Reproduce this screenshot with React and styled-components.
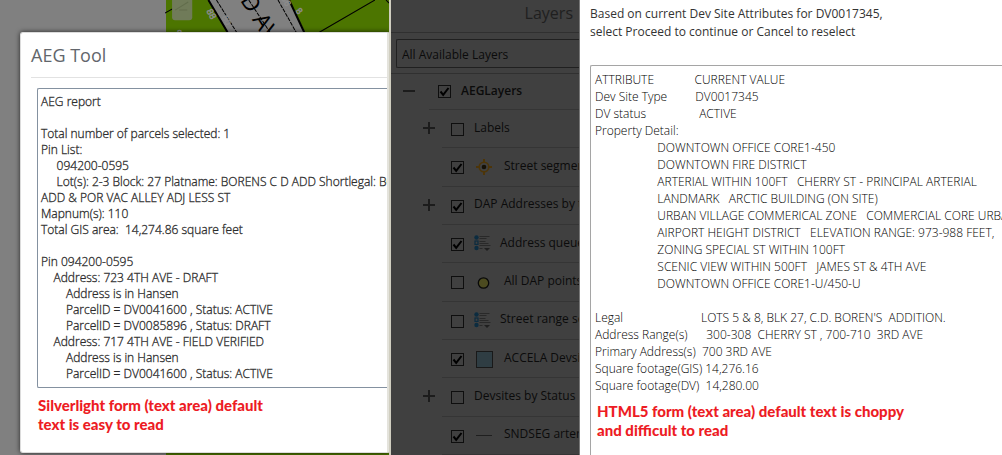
import React from "react";
import styled, { createGlobalStyle } from "styled-components";

const GlobalStyle = createGlobalStyle`
  * {
    box-sizing: border-box;
  }
  body {
    margin: 0;
    overflow: hidden;
    background-color: #fff;
    font-family: "Open Sans", "Noto Sans", sans-serif;
    font-size: 12px;
  }
`;

const Page = styled.main`
  display: grid;
  grid-template-columns: 391fr 189fr 422fr;
  height: 100vh;
  overflow: hidden;
`;

const MapPane = styled.section`
  position: relative;
  min-width: 0;
  overflow: hidden;
  padding: 32px 0 0 20px;
  background-color: #808080;
  border-right: 2px solid #d0cec0;
`;

const MapDrawing = styled.svg`
  position: absolute;
  top: 0;
  left: 165px;
  width: calc(100% - 165px);
  height: 100%;
`;

const Dialog = styled.div`
  position: relative;
  padding-left: 10px;
  padding-bottom: 18px;
  background-color: #fff;
  border: 1px solid #dcdcdc;
  border-right: 2px solid #e4e3dc;
  border-radius: 3px 0 0 3px;
  box-shadow: 0 0 5px rgba(0, 0, 0, 0.7);
`;

const DialogTitle = styled.h1`
  margin: 0;
  padding: 10px 0;
  border-bottom: 1px solid #e2e2e2;
  color: #62666b;
  font-size: 18px;
  font-weight: 400;
  line-height: 24px;
`;

const DialogBody = styled.div`
  padding: 10px 0 0 6px;
`;

const TextBox = styled.textarea`
  display: block;
  width: 100%;
  margin: 0;
  padding: ${(props) => (props.$html5 ? "5px 4px" : "5px 3px")};
  border: 1px solid ${(props) => (props.$html5 ? "#a5a5a5" : "#8491a0")};
  border-right: 0;
  border-radius: 2px 0 0 2px;
  outline: none;
  resize: none;
  overflow: hidden;
  white-space: pre;
  background-color: #fff;
  color: ${(props) => (props.$html5 ? "#000" : "#2b2b2b")};
  font-family: "Open Sans", "Noto Sans", sans-serif;
  font-size: 12px;
  font-weight: 300;
  line-height: ${(props) => (props.$html5 ? "17px" : "16px")};
  -webkit-text-stroke: ${(props) => (props.$html5 ? "0" : "0.3px #2b2b2b")};
`;

const Note = styled.p`
  margin: 0;
  padding: 8px 0 0 1px;
  color: #ed1c24;
  font-family: Lato, "Open Sans", sans-serif;
  font-size: 15px;
  font-weight: 900;
  line-height: 19px;
  white-space: pre;
`;

const OverlayNote = styled(Note)`
  position: absolute;
  top: 337px;
  left: 7px;
  padding: 0;
`;

const LayerPane = styled.section`
  display: flex;
  flex-direction: column;
  min-width: 0;
  overflow: hidden;
  background-color: #404040;
  border-right: 1px solid #777;
  color: #0b0b0b;
`;

const PaneTitle = styled.h2`
  flex: none;
  margin: 0;
  padding: 0 6px 5px;
  border-bottom: 1px solid #303030;
  color: #1f1f1f;
  font-size: 16px;
  font-weight: 400;
  line-height: 27px;
  text-align: right;
`;

const FilterBar = styled.div`
  flex: none;
  padding: 6px 0 5px 5px;
  border-bottom: 1px solid #303030;
`;

const Filter = styled.select`
  display: block;
  appearance: none;
  width: 100%;
  height: 29px;
  padding: 2px 5px 0;
  border: 1px solid #202020;
  border-right: 0;
  border-radius: 2px 0 0 2px;
  background-color: #404040;
  color: #0b0b0b;
  font-family: inherit;
  font-size: 12px;
`;

const LayerList = styled.ul`
  flex: 1;
  display: flex;
  flex-direction: column;
  margin: 0;
  padding: 0;
  list-style: none;
`;

const LayerRow = styled.li`
  flex: ${(props) => (props.$root ? "0 0 36px" : "1")};
  display: grid;
  grid-template-columns: ${(props) => (props.$root ? "26px" : "19px")} 1fr;
  padding-left: ${(props) => (props.$root ? "12px" : "32px")};
`;

const Expander = styled.button`
  align-self: center;
  width: 12px;
  height: 12px;
  margin-bottom: 2px;
  padding: 0;
  border: 0;
  background: transparent;
  color: #1c1c1c;

  svg {
    display: block;
  }
`;

const LayerBody = styled.div`
  grid-column: 2;
  display: flex;
  align-items: center;
  min-width: 0;
  padding-left: 9px;
  border-bottom: 1px solid #353535;
`;

const Check = styled.input`
  appearance: none;
  flex: none;
  width: 13px;
  height: 13px;
  margin: ${(props) => (props.$root ? "0" : "2px")} 10px 0 0;
  border: 1px solid #0e0e0e;

  &:checked {
    background: url("data:image/svg+xml,%3Csvg xmlns='http://www.w3.org/2000/svg' viewBox='0 0 11 11'%3E%3Cpath d='M1.5 5.5L4.2 8.8L9.5 2' fill='none' stroke='%23000' stroke-width='2'/%3E%3C/svg%3E");
  }
`;

const Swatch = styled.span`
  flex: none;
  display: flex;
  width: ${(props) => (props.$narrow ? "26px" : "30px")};

  svg {
    display: block;
  }
`;

const LayerLabel = styled.label`
  font-size: 12px;
  font-weight: ${(props) => (props.$root ? 600 : 400)};
  line-height: 16px;
  padding-bottom: 2px;
  white-space: nowrap;
`;

const FormPane = styled.section`
  display: flex;
  flex-direction: column;
  min-width: 0;
  overflow: hidden;
  padding: 5px 0 0 10px;
  background-color: #fff;
`;

const Prompt = styled.p`
  margin: 0 0 24px;
  color: #333;
  font-size: 12px;
  line-height: 18px;
  white-space: pre;
`;

const FormBox = styled.div`
  position: relative;
`;

const report = [
  "AEG report",
  "",
  "Total number of parcels selected: 1",
  "Pin List:",
  "     094200-0595",
  "     Lot(s): 2-3 Block: 27 Platname: BORENS C D ADD Shortlegal: BORENS",
  "ADD & POR VAC ALLEY ADJ LESS ST",
  "Mapnum(s): 110",
  "Total GIS area:  14,274.86 square feet",
  "",
  "Pin 094200-0595",
  "    Address: 723 4TH AVE - DRAFT",
  "        Address is in Hansen",
  "        ParcelID = DV0041600 , Status: ACTIVE",
  "        ParcelID = DV0085896 , Status: DRAFT",
  "    Address: 717 4TH AVE - FIELD VERIFIED",
  "        Address is in Hansen",
  "        ParcelID = DV0041600 , Status: ACTIVE",
].join("\n");

const indent = " ".repeat(20);

const attributes = [
  "ATTRIBUTE             CURRENT VALUE",
  "Dev Site Type         DV0017345",
  "DV status                 ACTIVE",
  "Property Detail:",
  indent + "DOWNTOWN OFFICE CORE1-450",
  indent + "DOWNTOWN FIRE DISTRICT",
  indent + "ARTERIAL WITHIN 100FT   CHERRY ST - PRINCIPAL ARTERIAL",
  indent + "LANDMARK   ARCTIC BUILDING (ON SITE)",
  indent + "URBAN VILLAGE COMMERICAL ZONE   COMMERCIAL CORE URBAN",
  indent + "AIRPORT HEIGHT DISTRICT   ELEVATION RANGE: 973-988 FEET,",
  indent + "ZONING SPECIAL ST WITHIN 100FT",
  indent + "SCENIC VIEW WITHIN 500FT   JAMES ST & 4TH AVE",
  indent + "DOWNTOWN OFFICE CORE1-U/450-U",
  "",
  "Legal                         LOTS 5 & 8, BLK 27, C.D. BOREN'S  ADDITION.",
  "Address Range(s)      300-308  CHERRY ST , 700-710  3RD AVE",
  "Primary Address(s)  700 3RD AVE",
  "Square footage(GIS) 14,276.16",
  "Square footage(DV)  14,280.00",
].join("\n");

const layers = [
  { name: "AEGLayers", root: true, expander: "minus", checked: true },
  { name: "Labels", expander: "plus" },
  { name: "Street segments", icon: "target", checked: true },
  { name: "DAP Addresses by type", expander: "plus", checked: true },
  { name: "Address queue", icon: "legend", checked: true },
  { name: "All DAP points", icon: "dot" },
  { name: "Street range segments", icon: "legend" },
  { name: "ACCELA Devsites", icon: "square", checked: true },
  { name: "Devsites by Status", expander: "plus" },
  { name: "SNDSEG arterials", icon: "line", checked: true },
];

function LayerIcon({ type }) {
  if (type === "target") {
    return (
      <svg width="20" height="18" viewBox="0 0 20 18">
        <g fill="none" stroke="#4d3508" strokeWidth="1.6">
          <circle cx="10" cy="9" r="4.8" />
          <path d="M10 1v4M10 13v4M2 9h4M14 9h4" strokeWidth="2" />
        </g>
        <circle cx="10" cy="9" r="2.3" fill="#151005" />
      </svg>
    );
  }
  if (type === "legend") {
    return (
      <svg width="17" height="17" viewBox="0 0 17 17">
        <g fill="#0c2c40">
          <circle cx="2.5" cy="2.5" r="2.2" />
          <circle cx="2.5" cy="13" r="2.2" />
        </g>
        <rect x="1" y="6" width="3" height="3.4" fill="none" stroke="#0c2c40" strokeWidth="1.2" />
        <path d="M5.500 1.500h10M5.500 3.500h7M5.500 6.500h6M5.500 8.500h9M5.500 10.500h11M5.500 13.500h3" stroke="#292929" />
        <path d="M10 13h6l-3 3z" fill="#1f1f1f" />
      </svg>
    );
  }
  if (type === "dot") {
    return (
      <svg width="20" height="16" viewBox="0 0 20 16">
        <circle cx="9.500" cy="9" r="5.200" fill="#4c4b20" stroke="#090909" strokeWidth="1.300" />
      </svg>
    );
  }
  if (type === "square") {
    return (
      <svg width="20" height="18" viewBox="0 0 20 18">
        <rect x="2.500" y="1.500" width="16" height="16" fill="#2f3d43" stroke="#191919" />
      </svg>
    );
  }
  return (
    <svg width="20" height="16" viewBox="0 0 20 16">
      <path d="M2 8.500h16" stroke="#1f1f1f" />
    </svg>
  );
}

function Layer({ layer }) {
  const id = "layer-" + layer.name.toLowerCase().replace(/ /g, "-");

  return (
    <LayerRow $root={layer.root}>
      {layer.expander && (
        <Expander type="button" aria-label={"Toggle " + layer.name}>
          <svg width="12" height="12" viewBox="0 0 12 12">
            <path
              d={layer.expander === "plus" ? "M0 6h12M6 0v12" : "M0 6h12"}
              stroke="currentColor"
              strokeWidth="2"
            />
          </svg>
        </Expander>
      )}
      <LayerBody>
        <Check type="checkbox" id={id} $root={layer.root} defaultChecked={layer.checked} />
        {layer.icon && (
          <Swatch $narrow={layer.icon === "legend"}>
            <LayerIcon type={layer.icon} />
          </Swatch>
        )}
        <LayerLabel htmlFor={id} $root={layer.root}>
          {layer.name}
        </LayerLabel>
      </LayerBody>
    </LayerRow>
  );
}

function ParcelMap() {
  return (
    <MapDrawing viewBox="0 0 222 455" preserveAspectRatio="xMinYMin slice" aria-hidden="true">
      <rect x="1" width="260" height="455" fill="#4c7500" />
      <path d="M43 0H123L139 32L160 70H85L62 32Z" fill="#808080" />
      <g stroke="#000" fill="none">
        <path d="M43 0L62 32M123 0L138 32" strokeWidth="2" />
        <path d="M51 0L71 32M112 0L130 32M83 0L104 32" strokeDasharray="4 1" />
        <path d="M0 13L23 0M153 32L208 0M219 0l3 3" />
      </g>
      <rect x="7" y="-10" width="20" height="30" rx="3" fill="#707b59" />
      <path d="M10 10L23 2M14 10h8" stroke="#626d4c" />
      <text transform="translate(74 0) rotate(58)" fontFamily="Open Sans" fontSize="23" fill="#000">
        D AVE
      </text>
      <g fontFamily="Liberation Sans" fontSize="9" fill="#8b8b8b" stroke="#8b8b8b" strokeWidth="0.5">
        <text transform="translate(41 11) rotate(62)">88</text>
        <text transform="translate(56 17) rotate(62)" fill="none">80</text>
        <text transform="translate(115 -2) rotate(62)">86</text>
        <text transform="translate(129 11) rotate(50)">8</text>
        <text x="12" y="36">8</text>
      </g>
    </MapDrawing>
  );
}

export default function App() {
  return (
    <Page>
      <GlobalStyle />
      <MapPane>
        <ParcelMap />
        <Dialog>
          <DialogTitle>AEG Tool</DialogTitle>
          <DialogBody>
            <TextBox aria-label="AEG report" rows={18} spellCheck={false} defaultValue={report} />
            <Note>{"Silverlight form (text area) default\ntext is easy to read"}</Note>
          </DialogBody>
        </Dialog>
      </MapPane>

      <LayerPane>
        <PaneTitle>Layers</PaneTitle>
        <FilterBar>
          <Filter aria-label="Layer filter">
            <option>All Available Layers</option>
          </Filter>
        </FilterBar>
        <LayerList>
          {layers.map((layer) => (
            <Layer key={layer.name} layer={layer} />
          ))}
        </LayerList>
      </LayerPane>

      <FormPane>
        <Prompt>
          {"Based on current Dev Site Attributes for DV0017345,\nselect Proceed to continue or Cancel to reselect"}
        </Prompt>
        <FormBox>
          <TextBox
            $html5
            aria-label="Dev site attributes"
            rows={24}
            spellCheck={false}
            defaultValue={attributes}
          />
          <OverlayNote>
            {"HTML5 form (text area) default text is choppy\nand difficult to read"}
          </OverlayNote>
        </FormBox>
      </FormPane>
    </Page>
  );
}
